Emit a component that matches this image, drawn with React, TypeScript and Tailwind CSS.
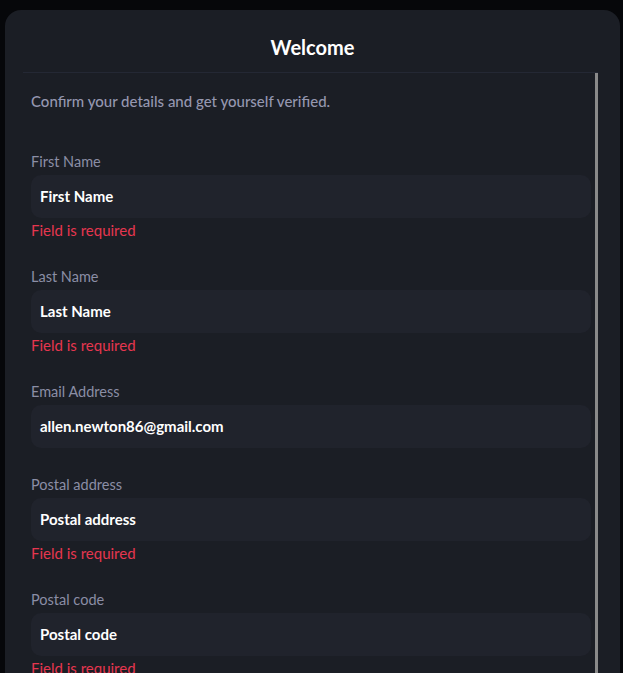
import React from "react";

interface FieldProps {
  label: string;
  value: string;
  error?: string;
}

const Field: React.FC<FieldProps> = ({ label, value, error }) => {
  return (
    <div className="flex flex-col mb-[27px]">
      <label className="text-[14.5px] leading-[20px] text-[#8b8ea6]">{label}</label>
      <div className="mt-[3px] h-[43px] rounded-[10px] bg-[#20232c] flex items-center px-[9px] mr-[4px]">
        <span className="text-[15px] font-bold text-white">{value}</span>
      </div>
      {error && (
        <p className="text-[15px] leading-[20px] mt-[2px] text-[#e6364f]">{error}</p>
      )}
    </div>
  );
};

const fields: FieldProps[] = [
  { label: "First Name", value: "First Name", error: "Field is required" },
  { label: "Last Name", value: "Last Name", error: "Field is required" },
  { label: "Email Address", value: "allen.newton86@gmail.com" },
  { label: "Postal address", value: "Postal address", error: "Field is required" },
  { label: "Postal code", value: "Postal code", error: "Field is required" },
];

export default function App() {
  return (
    <div
      className="h-[673px] w-[623px] overflow-hidden bg-[#06070a] pt-[10px] pl-[5px] pr-[3px]"
      style={{ fontFamily: "Lato, 'Noto Sans', sans-serif" }}
    >
      <div className="h-[700px] rounded-t-[16px] bg-[#1b1e25] flex flex-col">
        <div className="h-[62px] flex items-center justify-center pt-[12px]">
          <h2 className="text-[20px] font-bold text-white">Welcome</h2>
        </div>
        <div className="ml-[18px] mr-[22px] flex flex-1 border-t border-[#242834]">
          <div className="flex-1 pl-[8px] pt-[18px]">
            <p className="text-[15px] font-medium leading-[20px] text-[#9597b0] mb-[41px]">
              Confirm your details and get yourself verified.
            </p>
            {fields.map((f) => (
              <Field key={f.label} {...f} />
            ))}
          </div>
          <div className="w-[3px] bg-[#8a8a8a]" />
        </div>
      </div>
    </div>
  );
}
